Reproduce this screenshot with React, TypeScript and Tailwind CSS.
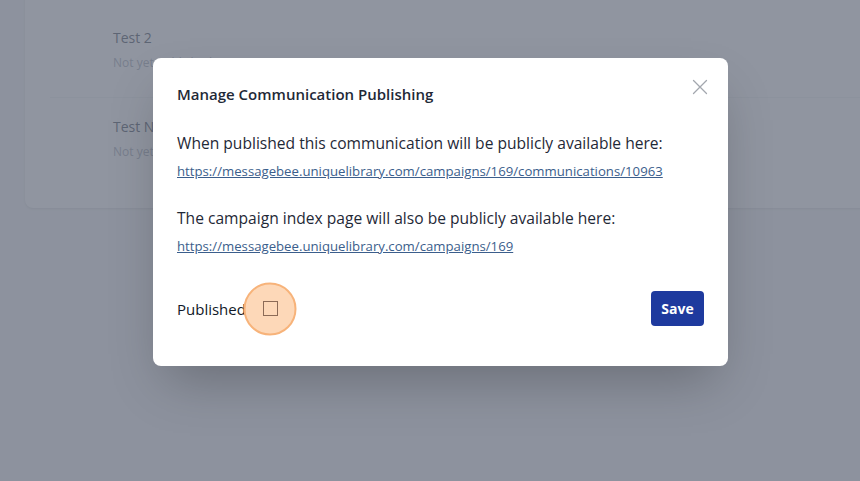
const FONT = { fontFamily: '"Open Sans", "Noto Sans", Arial, sans-serif' };

const rows = [
  { name: "Test 2", status: "Not yet published" },
  { name: "Test New", status: "Not yet published" },
];

const App = () => {
  return (
    <div className="relative h-[481px] w-[860px] overflow-hidden bg-[#f3f4f6]" style={FONT}>
      {/* page content behind the dialog */}
      <div className="-mt-[40px] ml-[25px] mr-[-20px] rounded-lg bg-white pt-[68px] shadow-sm">
        {rows.map((row, idx) => (
          <div
            key={row.name}
            className={idx === 0 ? "ml-[25px] h-[70px] border-b border-[#f0f1f3] pl-[63px]" : "ml-[25px] h-[110px] pl-[63px] pt-[19px]"}
          >
            <div className="text-[14px] font-medium leading-5 text-[#374151]">{row.name}</div>
            <div className="mt-[7px] text-[12px] leading-4 text-[#9ca3af]">{row.status}</div>
          </div>
        ))}
      </div>

      {/* overlay */}
      <div className="absolute inset-0 bg-[#6b7280]/75">
        <div className="ml-[153px] mt-[58px] w-[575px] rounded-lg bg-white pb-[40px] pl-6 pr-6 pt-[24px] shadow-2xl">
          <div className="flex items-start justify-between">
            <h2 className="text-[15px] font-semibold leading-6 text-[#1f2937]">Manage Communication Publishing</h2>
            <button className="-mr-[4px] -mt-[3px] text-[#a3a7ae]">
              <svg width="16" height="16" viewBox="0 0 16 16" fill="none" stroke="currentColor" strokeWidth="1.3" strokeLinecap="round">
                <path d="M1.5 1.5l13 13M14.5 1.5l-13 13" />
              </svg>
            </button>
          </div>

          <p className="mt-[25px] text-[15.6px] leading-6 text-[#1f2937]">
            When published this communication will be publicly available here:
          </p>
          <a className="mt-[6px] block text-[13.2px] leading-5 text-[#3b5e8c] underline">
            https://messagebee.uniquelibrary.com/campaigns/169/communications/10963
          </a>

          <p className="mt-[25px] text-[15.6px] leading-6 text-[#1f2937]">
            The campaign index page will also be publicly available here:
          </p>
          <a className="mt-[6px] block text-[13.2px] leading-5 text-[#3b5e8c] underline">
            https://messagebee.uniquelibrary.com/campaigns/169
          </a>

          <div className="mt-[35px] flex items-center justify-between">
            <div className="flex items-center">
              <span className="text-[15px] leading-6 text-[#111827]">Published</span>
              <div className="relative ml-[17px] flex h-[15px] w-[15px] items-center justify-center">
                <div className="absolute left-1/2 top-1/2 h-[53px] w-[53px] -translate-x-1/2 -translate-y-1/2 rounded-full border-2 border-[#f7b37a] bg-[#fdd4b0]/90" />
                <div className="relative h-[15px] w-[15px] border border-[#8c6b57]" />
              </div>
            </div>
            <button className="h-[35px] w-[53px] rounded-[4px] bg-[#1e3a9e] text-[14px] font-bold text-white">
              Save
            </button>
          </div>
        </div>
      </div>
    </div>
  );
};

export default App;
